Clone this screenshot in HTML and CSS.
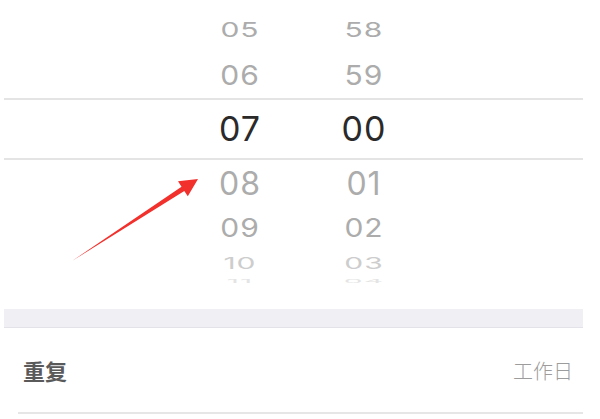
FILE: index.html
```html
<!DOCTYPE html>
<html lang="zh-CN">
<head>
    <meta charset="UTF-8">
    <meta name="viewport" content="width=device-width, initial-scale=1.0">
    <title>闹钟</title>
    <link rel="stylesheet" href="styles.css">
</head>
<body>
    <div class="screen">
        <!-- time wheel -->
        <div class="picker">
            <div class="wheel-row row-far"><span>05</span><span>58</span></div>
            <div class="wheel-row row-near-top"><span>06</span><span>59</span></div>
            <div class="wheel-row row-selected"><span>07</span><span>00</span></div>
            <div class="wheel-row row-near-bottom"><span>08</span><span>01</span></div>
            <div class="wheel-row row-mid"><span>09</span><span>02</span></div>
            <div class="wheel-row row-edge"><span>10</span><span>03</span></div>
            <div class="wheel-row row-hidden"><span>11</span><span>04</span></div>

            <svg class="pointer" width="600" height="300" viewBox="0 0 600 300">
                <polygon points="72,261 181.5,186.7 178,181.3 198,179 187.8,196.3 184.3,190.9" fill="#f2302c"/>
            </svg>
        </div>

        <div class="group-gap"></div>

        <div class="setting-row">
            <span class="setting-label">重复</span>
            <span class="setting-value">工作日</span>
        </div>
    </div>
</body>
</html>
```

FILE: styles.css
```css
body {
    margin: 0;
    background: #fff;
    font-family: Inter, "Liberation Sans", sans-serif;
    color: #333;
}
.screen {
    width: 579px;
    margin-left: 4px;
}
.picker {
    position: relative;
    padding-top: 8px;
    height: 301px;
}
.wheel-row {
    display: grid;
    grid-template-columns: 80px 80px;
    column-gap: 44px;
    padding-left: 196px;
    align-items: center;
    font-size: 30px;
    color: #acacac;
}
.wheel-row span {
    display: block;
    line-height: 1;
    text-align: center;
    letter-spacing: 1px;
}
.row-far {
    height: 44px;
}
.row-far span {
    transform: scaleY(0.66);
}
.row-near-top {
    height: 46px;
}
.row-near-top span {
    transform: scaleY(0.92);
}
.row-selected {
    height: 58px;
    border-top: 2px solid #e4e4e4;
    border-bottom: 2px solid #e4e4e4;
    font-size: 34px;
    color: #2a2a2a;
}
.row-near-bottom {
    height: 48px;
    font-size: 32px;
}
.row-mid {
    height: 40px;
}
.row-mid span {
    transform: scaleY(0.86);
}
.row-edge {
    height: 18px;
    color: #cdcdcd;
}
.row-edge span {
    transform: scaleY(0.52);
}
.row-hidden {
    height: 8px;
    color: #e4e4e4;
}
.row-hidden span {
    transform: scaleY(0.16);
}
.pointer {
    position: absolute;
    left: -4px;
    top: 0;
}
.group-gap {
    height: 18px;
    background: #efeff4;
    border-bottom: 1px solid #e2e2e8;
}
.setting-row {
    display: flex;
    justify-content: space-between;
    align-items: center;
    height: 84px;
    margin-left: 14px;
    padding: 0 10px 0 5px;
    border-bottom: 2px solid #e6e6e6;
    font-family: "Noto Sans CJK SC", sans-serif;
}
.setting-label {
    font-size: 22px;
    font-weight: bold;
    color: #5a5a5a;
}
.setting-value {
    font-size: 20px;
    font-weight: 300;
    color: #9c9c9c;
}
```
